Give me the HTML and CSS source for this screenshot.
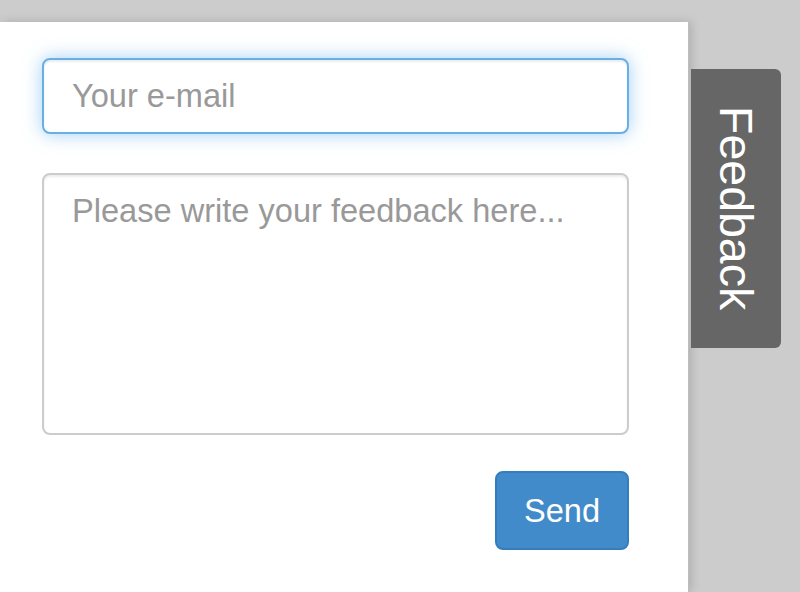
FILE: index.html
```html
<!DOCTYPE html>
<html lang="en">
<head>
<meta charset="utf-8">
<title>Feedback</title>
<link rel="stylesheet" href="styles.css">
</head>
<body>
  <div class="panel">
    <form class="form">
      <input class="field email" type="text" placeholder="Your e-mail">
      <textarea class="field message" placeholder="Please write your feedback here..."></textarea>
      <div class="actions">
        <button class="send" type="button">Send</button>
      </div>
    </form>
  </div>
  <div class="tab">Feedback</div>
</body>
</html>
```

FILE: styles.css
```css
html, body {
  margin: 0;
  padding: 0;
}
body {
  background: #cccccc;
  display: flex;
  align-items: flex-start;
  height: 592px;
  overflow: hidden;
  font-family: "Liberation Sans", Arial, Helvetica, sans-serif;
}
.panel {
  box-sizing: border-box;
  width: 688px;
  height: 570px;
  margin-top: 22px;
  padding: 36px 59px 0 42px;
  background: #ffffff;
  box-shadow: 1px 0 0 #bdbdbd, 3px 0 9px rgba(0, 0, 0, 0.16);
}
.form {
  display: flex;
  flex-direction: column;
}
.field {
  box-sizing: border-box;
  width: 100%;
  margin: 0;
  font-family: "Liberation Sans", Arial, Helvetica, sans-serif;
  font-size: 32.6px;
  color: #555555;
  background: #ffffff;
  border: 2px solid #cccccc;
  border-radius: 8px;
  padding: 13px 28px;
  outline: none;
  line-height: 1.4;
}
.field::placeholder {
  color: #999999;
  opacity: 1;
}
.email {
  height: 76px;
  border-color: #66afe9;
  box-shadow: inset 0 2px 2px rgba(0, 0, 0, 0.075), 0 0 18px rgba(102, 175, 233, 0.6);
}
.message {
  height: 262px;
  margin-top: 39px;
  resize: none;
  display: block;
  box-shadow: inset 0 2px 2px rgba(0, 0, 0, 0.075);
}
.actions {
  display: flex;
  justify-content: flex-end;
  margin-top: 36px;
}
.send {
  box-sizing: border-box;
  width: 134px;
  height: 79px;
  margin: 0;
  padding: 0;
  font-family: "Liberation Sans", Arial, Helvetica, sans-serif;
  font-size: 32.6px;
  color: #ffffff;
  background: #428bca;
  border: 2px solid #357ebd;
  border-radius: 8px;
}
.tab {
  box-sizing: border-box;
  width: 90px;
  height: 279px;
  margin-top: 69px;
  margin-left: 3px;
  background: #666666;
  border-radius: 0 6px 6px 0;
  color: #ffffff;
  font-size: 46.5px;
  writing-mode: vertical-rl;
  display: flex;
  align-items: center;
  justify-content: center;
  line-height: 1;
}
```
